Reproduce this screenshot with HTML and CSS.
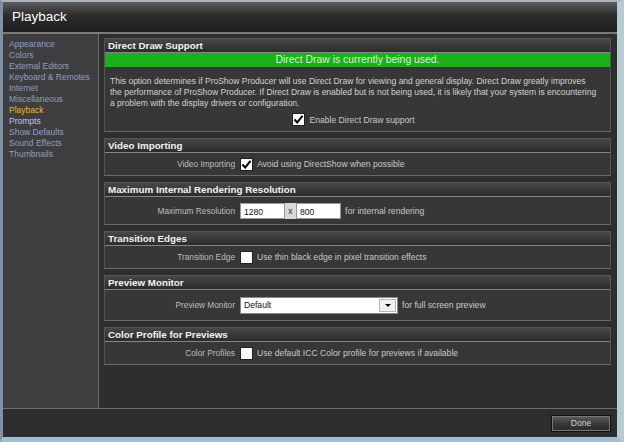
FILE: index.html
```html
<!DOCTYPE html>
<html lang="en">

<head>
	<meta charset="UTF-8">
	<meta name="viewport" content="width=device-width, initial-scale=1.0">
	<title>Playback</title>
	<link rel="stylesheet" href="styles.css">
</head>

<body>
	<div class="window">
		<div class="titlebar">Playback</div>
		<div class="content">
			<ul class="nav">
				<li>Appearance</li>
				<li>Colors</li>
				<li>External Editors</li>
				<li>Keyboard &amp; Remotes</li>
				<li>Internet</li>
				<li>Miscellaneous</li>
				<li class="active">Playback</li>
				<li class="hover">Prompts</li>
				<li>Show Defaults</li>
				<li>Sound Effects</li>
				<li>Thumbnails</li>
			</ul>
			<div class="main">
				<div class="group">
					<div class="groupHead">Direct Draw Support</div>
					<div class="status">Direct Draw is currently being used.</div>
					<div class="desc">This option determines if ProShow Producer will use Direct Draw for viewing and general display. Direct Draw greatly improves<br>the performance of ProShow Producer. If Direct Draw is enabled but is not being used, it is likely that your system is encountering<br>a problem with the display drivers or configuration.</div>
					<div class="centerRow">
						<span class="check"><svg width="11" height="11" viewBox="0 0 11 11"><path d="M1.5 5.5 L4.2 8.5 L9.5 1.8" fill="none" stroke="#000" stroke-width="2"/></svg></span>
						<span class="text">Enable Direct Draw support</span>
					</div>
				</div>

				<div class="group">
					<div class="groupHead">Video Importing</div>
					<div class="row">
						<label>Video Importing</label>
						<span class="check"><svg width="11" height="11" viewBox="0 0 11 11"><path d="M1.5 5.5 L4.2 8.5 L9.5 1.8" fill="none" stroke="#000" stroke-width="2"/></svg></span>
						<span class="text">Avoid using DirectShow when possible</span>
					</div>
				</div>

				<div class="group">
					<div class="groupHead">Maximum Internal Rendering Resolution</div>
					<div class="row tall">
						<label>Maximum Resolution</label>
						<span class="field">1280</span>
						<span class="times">x</span>
						<span class="field">800</span>
						<span class="text">for internal rendering</span>
					</div>
				</div>

				<div class="group">
					<div class="groupHead">Transition Edges</div>
					<div class="row">
						<label>Transition Edge</label>
						<span class="check"></span>
						<span class="text">Use thin black edge in pixel transition effects</span>
					</div>
				</div>

				<div class="group">
					<div class="groupHead">Preview Monitor</div>
					<div class="row taller">
						<label>Preview Monitor</label>
						<span class="select">Default<span class="arrow"></span></span>
						<span class="text">for full screen preview</span>
					</div>
				</div>

				<div class="group">
					<div class="groupHead">Color Profile for Previews</div>
					<div class="row">
						<label>Color Profiles</label>
						<span class="check"></span>
						<span class="text">Use default ICC Color profile for previews if available</span>
					</div>
				</div>
			</div>
		</div>
		<div class="footer">
			<button class="done">Done</button>
		</div>
	</div>
</body>

</html>
```

FILE: styles.css
```css
body,
html {
	margin: 0;
	padding: 0;
	background: #9fbbcf;
}

.window {
	width: 624px;
	height: 442px;
	box-sizing: border-box;
	border-style: solid;
	border-width: 2px 7px 5px 3px;
	border-color: #a9b3ba #b7cad6 #a4bfd2 #7f92a3;
	background-color: #2e2e2e;
	display: flex;
	flex-direction: column;
	font-family: "Liberation Sans", Arial, sans-serif;
	color: #c8c8c8;
}

.titlebar {
	height: 30px;
	line-height: 30px;
	flex: 0 0 auto;
	padding-left: 9px;
	font-size: 13.5px;
	color: #fff;
	background-image: linear-gradient(#5c5c5c, #2c2c2c 45%, #1d1d1d);
	border-bottom: 2px solid #7a7a7a;
}

.content {
	flex: 1;
	display: flex;
	min-height: 0;
}

.nav {
	list-style: none;
	margin: 0;
	padding: 5px 0 0 6px;
	width: 96px;
	flex: 0 0 auto;
	box-sizing: border-box;
	background-color: #3e3e40;
	border-right: 1px solid #6c6c6c;
	font-size: 8.5px;
	line-height: 11px;
	color: #8e9fbc;
}

.nav .active {
	color: #e2b83e;
}

.nav .hover {
	color: #b7c9ec;
}

.main {
	flex: 1;
	min-width: 0;
	overflow: hidden;
	padding: 4px 6px 0 5px;
	background-color: #2e2e2e;
}

.group {
	border: 1px solid #555;
	border-bottom-color: #6a6a6a;
	background-color: #373737;
	margin-bottom: 6px;
}

.groupHead {
	height: 13px;
	line-height: 13px;
	padding-left: 3px;
	font-size: 9.8px;
	font-weight: bold;
	color: #f2f2f2;
	background-image: linear-gradient(#474747, #2c2c2c);
	border-bottom: 1px solid #868686;
}

.status {
	height: 14px;
	line-height: 14px;
	text-align: center;
	font-size: 10.4px;
	color: #d6f2cf;
	background-color: #1cb01c;
}

.desc {
	padding: 9px 5px 0;
	font-size: 8.5px;
	line-height: 11px;
	white-space: nowrap;
	overflow: hidden;
	color: #d2d2d2;
}

.centerRow {
	display: flex;
	justify-content: center;
	align-items: center;
	gap: 4px;
	height: 13px;
	margin: 4px 8px 5px 0;
	font-size: 8.6px;
}

.row {
	display: flex;
	align-items: center;
	height: 22px;
	font-size: 8.6px;
}

.row.tall {
	height: 27px;
}

.row.taller {
	height: 30px;
}

.row label {
	width: 130px;
	text-align: right;
	margin-right: 5px;
	font-size: 8.3px;
	color: #bdbdbd;
}

.row .text {
	margin-left: 4px;
}

.check {
	width: 13px;
	height: 13px;
	flex: 0 0 auto;
	box-sizing: border-box;
	border: 1px solid #222;
	background-color: #fbfbfb;
	display: flex;
	align-items: center;
	justify-content: center;
}

.field {
	width: 45px;
	height: 16px;
	line-height: 16px;
	box-sizing: border-box;
	padding-left: 3px;
	background-color: #fff;
	color: #111;
	border: 1px solid #999;
}

.times {
	width: 11px;
	height: 16px;
	line-height: 16px;
	text-align: center;
	background-color: #d9d9d9;
	color: #222;
}

.select {
	position: relative;
	width: 158px;
	height: 17px;
	line-height: 15px;
	box-sizing: border-box;
	padding-left: 3px;
	background-color: #fff;
	color: #111;
	border: 1px solid #8a8a8a;
}

.select .arrow {
	position: absolute;
	top: 1px;
	right: 1px;
	width: 17px;
	height: 13px;
	box-sizing: border-box;
	border: 1px solid #b8b8b8;
	background-color: #f0f0f0;
}

.select .arrow::after {
	content: "";
	position: absolute;
	left: 5px;
	top: 4px;
	border-left: 3px solid transparent;
	border-right: 3px solid transparent;
	border-top: 3px solid #000;
}

.footer {
	flex: 0 0 auto;
	height: 28px;
	border-top: 1px solid #6e6e6e;
	background-color: #2d2d2d;
	display: flex;
	justify-content: flex-end;
	align-items: center;
	padding-right: 6px;
}

.done {
	width: 60px;
	height: 17px;
	padding: 0;
	font-family: inherit;
	font-size: 8.5px;
	color: #d0d0d0;
	background-image: linear-gradient(#5e5e5e, #3a3a3a 50%, #2a2a2a);
	border: 1px solid #111;
	box-shadow: inset 0 0 0 1px #777;
}
```
